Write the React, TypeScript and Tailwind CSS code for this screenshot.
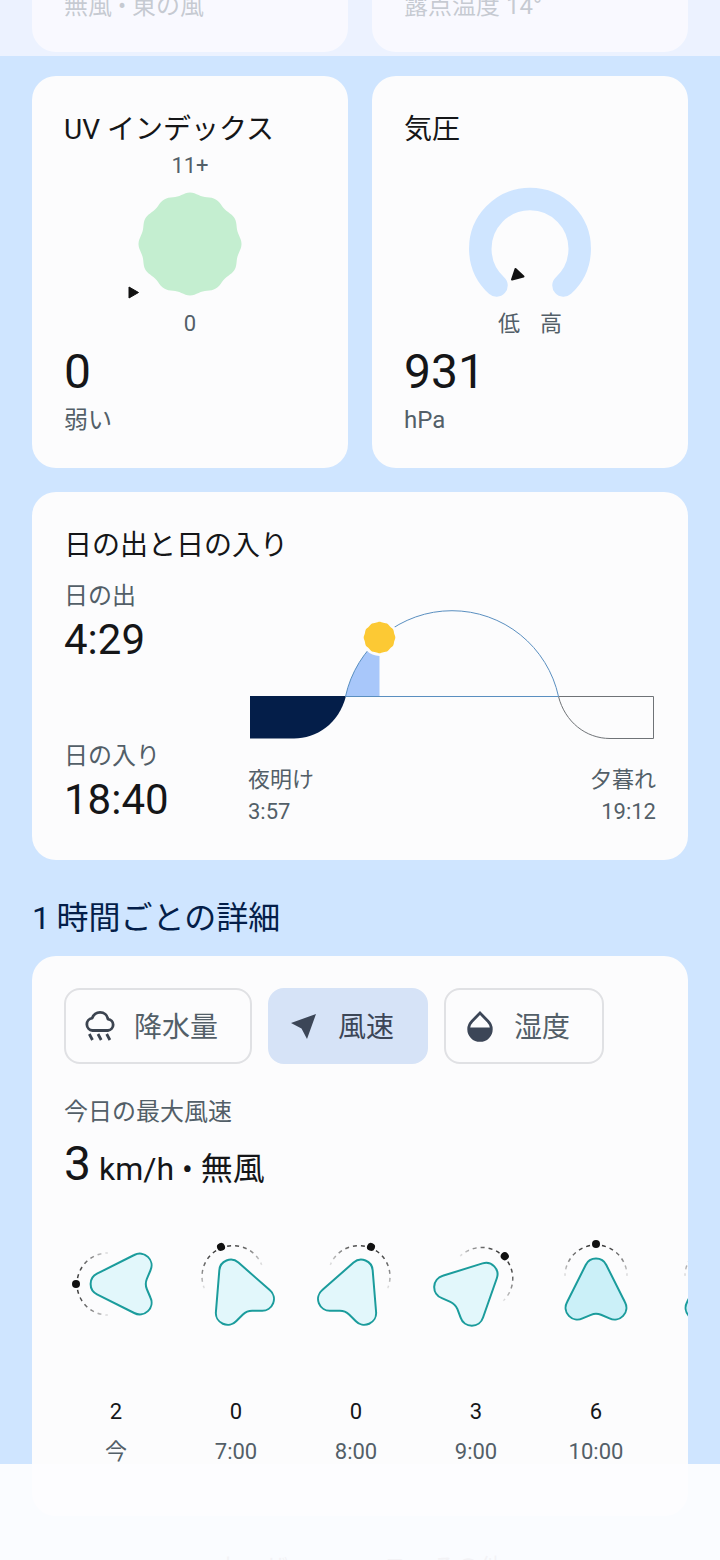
import { useState } from "react";
import type { ReactNode } from "react";

// ---------------------------------------------------------------------------
// Data
// ---------------------------------------------------------------------------

const HOURS = [
  { time: "今", speed: 2, angle: -90 },
  { time: "7:00", speed: 0, angle: -22 },
  { time: "8:00", speed: 0, angle: 22 },
  { time: "9:00", speed: 3, angle: 46 },
  { time: "10:00", speed: 6, angle: 0 },
];

const TABS = [
  { id: "rain", label: "降水量", Icon: RainIcon },
  { id: "wind", label: "風速", Icon: WindIcon },
  { id: "humidity", label: "湿度", Icon: HumidityIcon },
];

// Rounded star outline used by the UV dial and the sun marker
function scallop(cx: number, cy: number, radius: number, depth: number) {
  const points = [];
  for (let i = 0; i < 144; i++) {
    const a = (i / 144) * Math.PI * 2;
    const r = radius - depth + depth * Math.cos(a * 12);
    points.push(`${(cx + r * Math.cos(a)).toFixed(2)},${(cy + r * Math.sin(a)).toFixed(2)}`);
  }
  return points.join(" ");
}

// ---------------------------------------------------------------------------
// Icons
// ---------------------------------------------------------------------------

function RainIcon() {
  return (
    <svg className="size-8" viewBox="0 0 32 32" fill="none" stroke="#3c4450" strokeWidth="2.8" aria-hidden="true">
      <path
        strokeLinejoin="round"
        d="M8.500 20.500a6.200 6.200 0 0 1-.4-12.300C9.500 4.800 12.400 2.400 16 2.400c4.200 0 7.300 2.900 7.900 6.700a5.720 5.720 0 0 1 0 11.400Z"
      />
      <path d="M5.300 24l3.200 6M14 24l3.200 6M22.700 24l3.200 6" />
    </svg>
  );
}

function WindIcon() {
  return (
    <svg className="size-8" viewBox="0 0 32 32" fill="#3c4657" aria-hidden="true">
      <path d="M28 4 19 29 13.500 18.500 3 13Z" />
    </svg>
  );
}

function HumidityIcon() {
  return (
    <svg className="size-8" viewBox="0 0 32 32" aria-hidden="true">
      <path
        fill="#3c4657"
        fillRule="evenodd"
        d="M16 1 25 10.200A12.700 12.700 0 1 1 7 10.200ZM16 5 9 12.200A10 10 0 0 0 6.200 17.500H25.800A10 10 0 0 0 23 12.200Z"
      />
    </svg>
  );
}

function WindArrow({ angle, speed, id }: { angle: number; speed: number; id: string }) {
  return (
    <svg className="size-[120px]" viewBox="-60 -60 120 120" role="img" aria-label={`風速 ${speed} km/h`}>
      <defs>
        <linearGradient id={id} gradientUnits="userSpaceOnUse" x1="0" y1="-40" x2="0" y2="-7">
          <stop offset="0" stopColor="#333" />
          <stop offset="1" stopColor="#333" stopOpacity="0.1" />
        </linearGradient>
      </defs>
      <g transform={`rotate(${angle})`}>
        <path
          d="M0 -39A31 31 0 0 0 -31 -8M0 -39A31 31 0 0 1 31 -8"
          fill="none"
          stroke={`url(#${id})`}
          strokeWidth="1.5"
          strokeDasharray="4 4"
          strokeDashoffset="-6"
        />
        <circle cx="0" cy="-40" r="4" fill="#111" />
        <path
          d="M10.300 -19A11.500 11.500 0 0 0 -10.300 -19L-29 18.200A11.800 11.800 0 0 0 -13.500 34.400L-5 30.800Q0 28.800 5 30.800L13.500 34.400A11.800 11.800 0 0 0 29 18.200Z"
          fill={speed > 5 ? "#cbf0f8" : "#e2f7fb"}
          stroke="#1b9c9c"
          strokeWidth="2"
        />
      </g>
    </svg>
  );
}

// ---------------------------------------------------------------------------
// Cards
// ---------------------------------------------------------------------------

function Card({ title, children }: { title: string; children: ReactNode }) {
  return (
    <section className="rounded-3xl bg-[#fcfcfd] px-8 pt-8 pb-7">
      <h2 className="text-[28px] leading-11">{title}</h2>
      {children}
    </section>
  );
}

function Reading({ value, unit }: { value: string; unit: string }) {
  return (
    <>
      <p className="mt-1 text-5xl leading-14">{value}</p>
      <p className="text-2xl leading-10 text-[#535f68]">{unit}</p>
    </>
  );
}

function UvCard() {
  return (
    <Card title="UV インデックス">
      <div className="flex flex-col items-center text-[22px] leading-8 text-[#535f68]">
        <span className="leading-7">11+</span>
        <svg className="h-32 w-40" viewBox="0 0 160 128" aria-hidden="true">
          <polygon points={scallop(80, 64, 51.5, 1.2)} fill="#c4eed0" />
          <path d="M19 107v11l9.500 -5.500Z" fill="#111" stroke="#111" strokeLinejoin="round" />
        </svg>
        <span>0</span>
      </div>
      <Reading value="0" unit="弱い" />
    </Card>
  );
}

function PressureCard() {
  return (
    <Card title="気圧">
      <div className="flex flex-col items-center pt-7 text-[22px] leading-8 text-[#535f68]">
        <svg className="h-32 w-40" viewBox="0 0 160 128" aria-hidden="true">
          <path
            d="M46.500 105.500A49.700 49.700 0 1 1 113.500 105.500"
            fill="none"
            stroke="#cfe5ff"
            strokeWidth="22.500"
            strokeLinecap="round"
          />
          <path d="M65.500 89L62 99.500L73.500 96.500Z" fill="#111" stroke="#111" strokeWidth="2" strokeLinejoin="round" />
        </svg>
        <div className="flex gap-5">
          <span>低</span>
          <span>高</span>
        </div>
      </div>
      <Reading value="931" unit="hPa" />
    </Card>
  );
}

function SunTime({ label, time }: { label: string; time: string }) {
  return (
    <div>
      <dt className="text-2xl leading-8 text-[#535f68]">{label}</dt>
      <dd className="text-[42px] leading-14">{time}</dd>
    </div>
  );
}

function SunCard() {
  return (
    <section className="rounded-3xl bg-[#fcfcfd] p-8">
      <h2 className="text-[28px] leading-11">日の出と日の入り</h2>
      <div className="mt-3 flex">
        <dl className="flex w-46 shrink-0 flex-col justify-between">
          <SunTime label="日の出" time="4:29" />
          <SunTime label="日の入り" time="18:40" />
        </dl>
        <div className="min-w-0 flex-1 text-[22px] leading-8 text-[#535f68]">
          <svg className="w-full" viewBox="0 0 408 184" fill="none" aria-hidden="true">
            <path d="M97.500 116.500A109 109 0 0 1 131.500 58.500V116.500Z" fill="#a8c7fa" />
            <path d="M2 116H98C91 144 68 158.500 46 158.500H2Z" fill="#041e49" />
            <path d="M310.500 116.500H405.500V158.500H362C338 158.500 317 142 310.500 116.500" stroke="#6f7377" />
            <path d="M97.500 116.500A109 109 0 0 1 310.500 116.500Z" stroke="#5a8fc0" />
            <circle cx="131.500" cy="57.500" r="18.500" fill="#fcfcfd" />
            <polygon points={scallop(131.5, 57.5, 15.8, 0.3)} fill="#fcc934" />
          </svg>
          <div className="flex justify-between">
            <p>
              夜明け
              <br />
              3:57
            </p>
            <p className="text-right">
              夕暮れ
              <br />
              19:12
            </p>
          </div>
        </div>
      </div>
    </section>
  );
}

function HourlyCard() {
  const [active, setActive] = useState("wind");

  return (
    <section className="overflow-hidden rounded-3xl bg-[#fcfcfd] pt-8 pb-11">
      <div className="flex gap-4 px-8">
        {TABS.map(({ id, label, Icon }) => (
          <button
            key={id}
            type="button"
            aria-pressed={active === id}
            onClick={() => setActive(id)}
            className={`flex h-19 items-center gap-[18px] rounded-2xl border-2 pr-8 pl-[18px] text-[28px] whitespace-nowrap ${
              active === id
                ? "border-[#d6e3f7] bg-[#d6e3f7] text-[#3c4657]"
                : "border-[#e0e1e4] text-[#535f68]"
            }`}
          >
            <Icon />
            <span className="pt-1">{label}</span>
          </button>
        ))}
      </div>

      <h3 className="mt-8 px-8 text-2xl leading-8 text-[#535f68]">今日の最大風速</h3>
      <p className="mt-2 flex h-14 items-baseline gap-2 px-8 text-[32px]">
        <span className="text-5xl leading-14">3</span>
        <span>km/h • 無風</span>
      </p>

      <ul className="mt-8 flex pl-6">
        {HOURS.map((hour, i) => (
          <li key={hour.time} className="flex w-30 shrink-0 flex-col items-center text-[22px] leading-10">
            <WindArrow id={`wind-fade-${i}`} angle={hour.angle} speed={hour.speed} />
            <span className="mt-12">{hour.speed}</span>
            <span className="text-[#535f68]">{hour.time}</span>
          </li>
        ))}
        {/* Next hour peeks in at the edge of the scroller */}
        <li className="w-30 shrink-0">
          <WindArrow id="wind-fade-next" angle={0} speed={6} />
        </li>
      </ul>
    </section>
  );
}

// ---------------------------------------------------------------------------
// Page
// ---------------------------------------------------------------------------

export default function App() {
  return (
    <div className="relative h-screen overflow-hidden bg-[#cfe5ff] font-[Roboto,'Noto_Sans_CJK_JP',sans-serif] text-[#151618]">
      <main className="px-8">
        {/* Previous row, scrolled mostly out of view */}
        <div className="grid h-13 grid-cols-2 content-end gap-6 text-2xl leading-10 text-[#535f68]">
          <p className="rounded-b-3xl bg-[#fcfcfd] px-8 pb-[26px]">無風 • 東の風</p>
          <p className="rounded-b-3xl bg-[#fcfcfd] px-8 pb-[26px]">露点温度 14°</p>
        </div>

        <div className="mt-6 grid grid-cols-2 gap-6">
          <UvCard />
          <PressureCard />
        </div>
        <div className="mt-6">
          <SunCard />
        </div>
        <h1 className="pt-9 pb-4 text-[32px] leading-11 text-[#041e49]">1&thinsp;時間ごとの詳細</h1>
        <HourlyCard />
        <p className="pt-8 text-center text-2xl leading-10 text-[#535f68]">ウェザーニュース&emsp;その他</p>
      </main>

      {/* System bar scrims */}
      <div className="pointer-events-none absolute inset-x-0 top-0 h-14 bg-[#f8f8ff]/70" />
      <div className="pointer-events-none absolute inset-x-0 bottom-0 h-24 bg-[#fdfdff]/94" />
    </div>
  );
}
